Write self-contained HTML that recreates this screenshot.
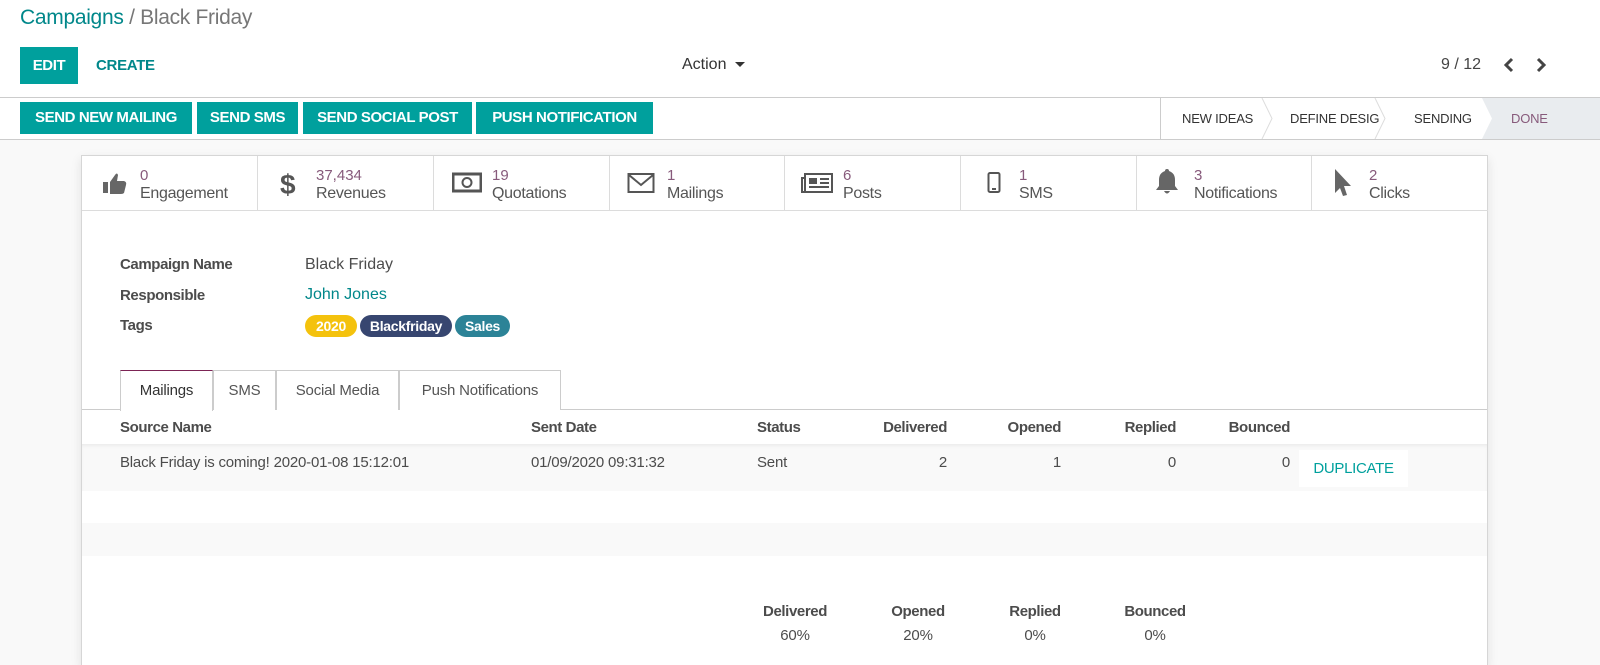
<!DOCTYPE html>
<html style="width:1600px;height:665px;overflow:hidden"><head><meta charset="utf-8"><style>
*{box-sizing:border-box;margin:0;padding:0}
body{width:1600px;height:665px;overflow:hidden;font-family:"Liberation Sans",sans-serif;font-size:15px;color:#4c4c4c;background:#f9f9f9;position:relative}
.abs{position:absolute}
.top{left:0;top:0;width:1600px;height:98px;background:#fff;border-bottom:1px solid #ccc}
.bc{left:20px;top:6px;font-size:21px;color:#00878a;letter-spacing:-0.3px}
.bc span{color:#777}
.btn{background:#00a09d;color:#fff;font-weight:bold;font-size:15px;height:32px;line-height:32px;text-align:center;letter-spacing:-0.4px}
.sbar{left:0;top:98px;width:1600px;height:42px;background:#fff;border-bottom:1px solid #ccc}
.stage{top:0;height:41px;line-height:41px;font-size:13px;color:#333;letter-spacing:-0.2px}
.sheet{left:81px;top:155px;width:1407px;height:510px;background:#fff;border:1px solid #d6d6d6;border-bottom:none;box-shadow:0 4px 10px rgba(0,0,0,.1)}
.sb{top:0;height:55px;border-right:1px solid #dcdcdc;border-bottom:1px solid #dcdcdc;width:176px}
.sb .n{position:absolute;left:58px;top:11px;color:#875a7b;font-size:15px;line-height:17px}
.sb .l{position:absolute;left:58px;top:29px;color:#555;font-size:16px;line-height:18px;letter-spacing:-0.3px}
.sb svg{position:absolute;left:20px;top:16px}
.lbl{font-weight:bold;color:#4c4c4c;font-size:15px;letter-spacing:-0.4px}
.tag{height:22px;line-height:22px;border-radius:11px;color:#fff;font-weight:bold;font-size:14px;text-align:center;top:315px;letter-spacing:-0.3px}
.tab{top:370px;height:40px;line-height:40px;text-align:center;font-size:15px;border:1px solid #ccc;border-bottom:none;color:#555;background:#fff;letter-spacing:-0.2px}
.th{font-weight:bold;font-size:15px;color:#4c4c4c;top:419px;letter-spacing:-0.4px}
.td{top:454px;font-size:15px;color:#4c4c4c;letter-spacing:-0.2px}
.r{text-align:right}
</style></head><body>
<div class="abs top"></div>
<div class="abs bc">Campaigns <span>/ Black Friday</span></div>
<div class="abs btn" style="left:20px;top:47px;width:58px;height:37px;line-height:37px">EDIT</div>
<div class="abs" style="left:96px;top:57px;color:#00878a;font-weight:bold;font-size:15px;letter-spacing:-0.3px">CREATE</div>
<div class="abs" style="left:682px;top:56px;font-size:16px;color:#333">Action <span style="display:inline-block;border-left:5px solid transparent;border-right:5px solid transparent;border-top:5px solid #333;vertical-align:middle;margin-left:4px"></span></div>
<div class="abs" style="left:1441px;top:56px;font-size:16px;color:#444">9 / 12</div>
<svg class="abs" style="left:1502px;top:57px" width="14" height="16"><path d="M10 2 L4 8 L10 14" stroke="#444" stroke-width="3" fill="none"/></svg>
<svg class="abs" style="left:1534px;top:57px" width="14" height="16"><path d="M4 2 L10 8 L4 14" stroke="#444" stroke-width="3" fill="none"/></svg>

<div class="abs sbar">
 <div class="abs btn" style="left:20px;top:4px;width:172px">SEND NEW MAILING</div>
 <div class="abs btn" style="left:197px;top:4px;width:101px">SEND SMS</div>
 <div class="abs btn" style="left:303px;top:4px;width:169px">SEND SOCIAL POST</div>
 <div class="abs btn" style="left:476px;top:4px;width:177px">PUSH NOTIFICATION</div>
 <div class="abs" style="left:1160px;top:0;width:1px;height:41px;background:#ccc"></div>
 <svg class="abs" style="left:1160px;top:0" width="440" height="41"><path d="M102 0 L112 20.5 L102 41" stroke="#ddd" fill="none"/><path d="M215 0 L225 20.5 L215 41" stroke="#ddd" fill="none"/><path d="M322 0 L440 0 L440 41 L322 41 L332 20.5 Z" fill="#e9ecef"/></svg>
 <div class="abs stage" style="left:1182px">NEW IDEAS</div>
 <div class="abs stage" style="left:1290px">DEFINE DESIG</div>
 <div class="abs stage" style="left:1414px">SENDING</div>
 <div class="abs stage" style="left:1511px;color:#875a7b">DONE</div>
</div>

<div class="abs sheet">
 <div class="abs sb" style="left:0"><svg width="26" height="24" viewBox="0 0 26 24"><rect x="1" y="10" width="5" height="11" fill="#666"/><path d="M8 10 L13 3 Q15 0 16 3 L15 9 L22 9 Q25 10 24 13 L22 21 Q21 22 19 22 L8 22 Z" fill="#666"/></svg><div class="n">0</div><div class="l">Engagement</div></div>
 <div class="abs sb" style="left:176px"><svg width="20" height="28" viewBox="0 0 20 28" style="top:14px"><text x="2" y="24" font-size="28" font-weight="bold" fill="#555" font-family="Liberation Sans">$</text></svg><div class="n">37,434</div><div class="l">Revenues</div></div>
 <div class="abs sb" style="left:352px"><svg width="30" height="22" viewBox="0 0 30 22" style="left:18px"><rect x="1" y="2" width="28" height="17" fill="none" stroke="#555" stroke-width="3"/><circle cx="15" cy="10.5" r="4.5" fill="none" stroke="#555" stroke-width="2"/></svg><div class="n">19</div><div class="l">Quotations</div></div>
 <div class="abs sb" style="left:527px"><svg width="28" height="22" viewBox="0 0 28 22" style="left:18px"><rect x="1.5" y="2" width="25" height="18" fill="none" stroke="#555" stroke-width="2"/><path d="M2 3 L14 13 L26 3" fill="none" stroke="#555" stroke-width="2"/></svg><div class="n">1</div><div class="l">Mailings</div></div>
 <div class="abs sb" style="left:703px"><svg width="32" height="22" viewBox="0 0 32 22" style="left:16px"><rect x="4" y="2" width="27" height="18" fill="none" stroke="#555" stroke-width="2"/><path d="M4 6 L1 6 L1 20 L4 20" fill="none" stroke="#555" stroke-width="2"/><rect x="8" y="6" width="8" height="6" fill="#555"/><path d="M19 7h9M19 11h9M8 15h20" stroke="#555" stroke-width="2"/></svg><div class="n">6</div><div class="l">Posts</div></div>
 <div class="abs sb" style="left:879px"><svg width="14" height="22" viewBox="0 0 14 22" style="left:26px"><rect x="1.5" y="1" width="11" height="19" rx="1.5" fill="none" stroke="#555" stroke-width="2"/><rect x="5" y="16" width="4" height="2" fill="#555"/></svg><div class="n">1</div><div class="l">SMS</div></div>
 <div class="abs sb" style="left:1054px"><svg width="26" height="28" viewBox="0 0 26 28" style="left:18px;top:12px"><path d="M13 1 Q15 1 15 3 Q21 5 21 12 L21 18 L24 22 L2 22 L5 18 L5 12 Q5 5 11 3 Q11 1 13 1 Z" fill="#666"/><path d="M10 23 Q13 28 16 23 Z" fill="#666"/></svg><div class="n">3</div><div class="l">Notifications</div></div>
 <div class="abs sb" style="left:1229px;width:177px;border-right:none"><svg width="20" height="30" viewBox="0 0 20 30" style="left:22px;top:12px"><path d="M2 1 L18 18 L11 18 L14 27 L10 28 L7 20 L2 25 Z" fill="#666"/></svg><div class="n">2</div><div class="l">Clicks</div></div>
</div>

<div class="abs lbl" style="left:120px;top:256px">Campaign Name</div>
<div class="abs" style="left:305px;top:256px;font-size:16px">Black Friday</div>
<div class="abs lbl" style="left:120px;top:287px">Responsible</div>
<div class="abs" style="left:305px;top:286px;font-size:16px;color:#00878a">John Jones</div>
<div class="abs lbl" style="left:120px;top:317px">Tags</div>
<div class="abs tag" style="left:305px;width:52px;background:#f4c20d">2020</div>
<div class="abs tag" style="left:360px;width:92px;background:#374670">Blackfriday</div>
<div class="abs tag" style="left:455px;width:55px;background:#2c8397">Sales</div>

<div class="abs" style="left:82px;top:409px;width:1405px;height:1px;background:#ccc"></div>
<div class="abs tab" style="left:120px;width:93px;border-top:1px solid #7c2455;color:#333;height:41px">Mailings</div>
<div class="abs tab" style="left:213px;width:63px">SMS</div>
<div class="abs tab" style="left:276px;width:123px">Social Media</div>
<div class="abs tab" style="left:399px;width:162px">Push Notifications</div>

<div class="abs th" style="left:120px">Source Name</div>
<div class="abs th" style="left:531px">Sent Date</div>
<div class="abs th" style="left:757px">Status</div>
<div class="abs th r" style="left:847px;width:100px">Delivered</div>
<div class="abs th r" style="left:961px;width:100px">Opened</div>
<div class="abs th r" style="left:1076px;width:100px">Replied</div>
<div class="abs th r" style="left:1190px;width:100px">Bounced</div>
<div class="abs" style="left:82px;top:444px;width:1405px;height:47px;background:#f9f9f9;box-shadow:inset 0 3px 4px -2px rgba(0,0,0,.08)"></div>
<div class="abs" style="left:82px;top:523px;width:1405px;height:33px;background:#f9f9f9"></div>
<div class="abs td" style="left:120px">Black Friday is coming! 2020-01-08 15:12:01</div>
<div class="abs td" style="left:531px">01/09/2020 09:31:32</div>
<div class="abs td" style="left:757px">Sent</div>
<div class="abs td r" style="left:847px;width:100px">2</div>
<div class="abs td r" style="left:961px;width:100px">1</div>
<div class="abs td r" style="left:1076px;width:100px">0</div>
<div class="abs td r" style="left:1190px;width:100px">0</div>
<div class="abs" style="left:1299px;top:450px;width:109px;height:37px;background:#fff;line-height:37px;text-align:center;color:#00a09d;font-size:15px;letter-spacing:-0.3px">DUPLICATE</div>

<div class="abs th" style="left:745px;top:603px;width:100px;text-align:center">Delivered</div>
<div class="abs th" style="left:868px;top:603px;width:100px;text-align:center">Opened</div>
<div class="abs th" style="left:985px;top:603px;width:100px;text-align:center">Replied</div>
<div class="abs th" style="left:1105px;top:603px;width:100px;text-align:center">Bounced</div>
<div class="abs td" style="left:745px;top:627px;width:100px;text-align:center">60%</div>
<div class="abs td" style="left:868px;top:627px;width:100px;text-align:center">20%</div>
<div class="abs td" style="left:985px;top:627px;width:100px;text-align:center">0%</div>
<div class="abs td" style="left:1105px;top:627px;width:100px;text-align:center">0%</div>
</body></html>
